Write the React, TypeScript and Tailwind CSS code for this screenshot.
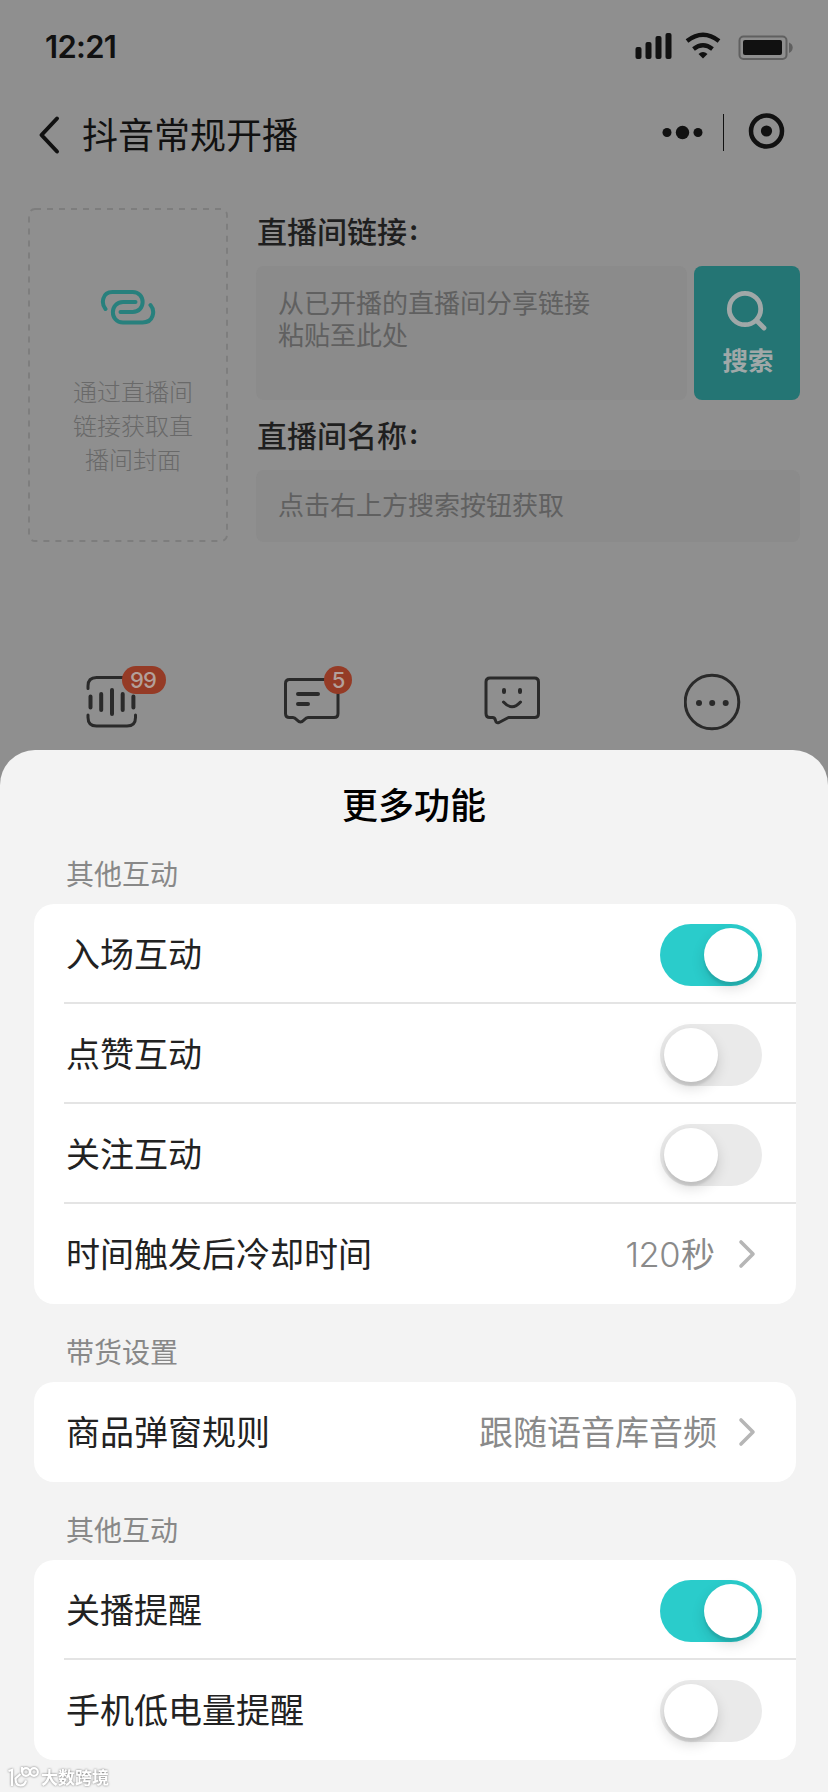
import { useState } from "react";
import type { ReactNode } from "react";

function Switch({ initial }: { initial: boolean }) {
  const [on, setOn] = useState(initial);
  return (
    <button
      type="button"
      role="switch"
      aria-checked={on}
      onClick={() => setOn(!on)}
      className={`mt-1 flex h-[62px] w-[102px] items-center rounded-full px-1 ${on ? "justify-end bg-[#2acccb]" : "justify-start bg-[#eaeaea]"}`}
    >
      <span className="size-[54px] rounded-full bg-white shadow-[0_6px_14px_rgba(0,0,0,0.14),0_4px_2px_rgba(0,0,0,0.08)]" />
    </button>
  );
}

function Value({ children }: { children: ReactNode }) {
  return (
    <div className="flex items-center pr-[6px] text-[34px] text-[#8a8a8a]">
      <span className="leading-[48px]">{children}</span>
      <svg width="18" height="30" viewBox="0 0 18 30" className="mt-[2px] ml-[21px]" fill="none" stroke="#b6b6b6" strokeWidth="3.600" strokeLinecap="round" strokeLinejoin="round">
        <path d="M3 3L15 15L3 27" />
      </svg>
    </div>
  );
}

function Row({ label, last, children }: { label: string; last?: boolean; children: ReactNode }) {
  return (
    <div className={`ml-[30px] flex h-[100px] items-center justify-between pr-[34px] pl-[2px] ${last ? "pb-[2px]" : "border-b-2 border-[#e4e4e4]"}`}>
      <span className="text-[34px] leading-[48px] text-[#222]">{label}</span>
      {children}
    </div>
  );
}

function Section({ title, children }: { title: string; children: ReactNode }) {
  return (
    <section>
      <h3 className="mb-[11px] pl-[32px] text-[28px] leading-10 text-[#888]">{title}</h3>
      <div className="rounded-[20px] bg-white">{children}</div>
    </section>
  );
}

function StatusBar() {
  return (
    <div className="flex h-[92px] items-center justify-between pr-[35px] pl-[45px]">
      <span className="mt-[2px] font-['Inter'] text-[31px] leading-10 font-semibold tracking-[-0.7px] text-[#111]">12:21</span>
      <svg width="160" height="30" viewBox="632 32 160 30" fill="none">
        <g fill="#111">
          <rect x="634.500" y="48" width="6" height="12" rx="2" />
          <rect x="644.500" y="43" width="6" height="17" rx="2" />
          <rect x="654.500" y="37" width="6" height="23" rx="2" />
          <rect x="664.500" y="34" width="6" height="26" rx="2" />
          <path d="M702 59.500L697.500 55Q702 51 706.500 55Z" />
          <rect x="742" y="41" width="39" height="15" rx="2" />
        </g>
        <path d="M686 42Q702 29.500 718 42M692.500 50Q702 42.500 711.500 50" stroke="#111" strokeWidth="4.300" />
        <rect x="738.500" y="37.500" width="47" height="22.500" rx="4" stroke="#606060" strokeWidth="2" />
        <path d="M788 43.500Q791.700 45 791.700 48.500T788 54Z" fill="#606060" />
      </svg>
    </div>
  );
}

function NavBar() {
  return (
    <div className="flex h-[86px] items-center justify-between pr-[42px] pl-[38px]">
      <div className="flex items-center">
        <svg width="22" height="40" viewBox="0 0 22 40" fill="none" stroke="#111" strokeWidth="4" strokeLinecap="round" strokeLinejoin="round">
          <path d="M19 3.500L3.500 20L19 36.500" />
        </svg>
        <h1 className="mb-1 ml-[22px] text-[36px] leading-[50px] text-[#111]">抖音常规开播</h1>
      </div>
      <svg width="124" height="40" viewBox="662 112 124 40" className="mb-[6px]" fill="#111">
        <circle cx="667" cy="132.500" r="4.500" />
        <circle cx="682.500" cy="132.500" r="6.700" />
        <circle cx="698" cy="132.500" r="4.500" />
        <rect x="723" y="114" width="1" height="37" />
        <circle cx="766.500" cy="131" r="15.500" fill="none" stroke="#111" strokeWidth="4.500" />
        <circle cx="766.500" cy="131" r="5.600" />
      </svg>
    </div>
  );
}

function CoverCard() {
  return (
    <div className="relative flex h-[334px] w-[200px] flex-col items-center">
      <svg className="absolute inset-0" width="200" height="334" fill="none">
        <rect x="1" y="1" width="198" height="332" rx="6" stroke="#7d7d7d" strokeWidth="1.800" strokeDasharray="6 6" />
      </svg>
      <svg width="56" height="36" viewBox="100 288.500 56 36" className="mt-[80.500px]" fill="none" stroke="#28807d" strokeWidth="4" strokeLinecap="round">
        <path d="M105.500 308.500C101 303 102 291.500 112.500 291.500H132.500C146 291.500 146 311.500 132.500 311.500H120.500" />
        <path d="M135.500 301.500H123C109.500 301.500 109.500 322 123 322H142.500C153.500 322 155.500 310.500 150.500 304.500" />
      </svg>
      <p className="mt-[49px] ml-[10px] w-[130px] text-center text-[24px] leading-[34px] font-light text-[#696969]">
        通过直播间
        <br />
        链接获取直
        <br />
        播间封面
      </p>
    </div>
  );
}

function FieldLabel({ children }: { children: ReactNode }) {
  return (
    <h2 className="flex h-[50px] items-center pb-[5px] text-[30px] leading-[45px] font-medium text-[#1f1f1f]">
      {children}
      <span className="ml-[2px] font-['Inter'] text-[28px] font-bold">:</span>
    </h2>
  );
}

function RoomForm() {
  return (
    <div className="flex gap-7 px-7 pt-[30px]">
      <CoverCard />
      <div className="flex flex-1 flex-col pl-px text-[26px] text-[#606060]">
        <FieldLabel>直播间链接</FieldLabel>
        <div className="-ml-px mt-2 flex h-[134px] gap-[7px]">
          <div className="flex-1 rounded-lg bg-[#8b8b8b] pt-5 pl-[22px] leading-8">
            从已开播的直播间分享链接
            <br />
            粘贴至此处
          </div>
          <button type="button" className="flex w-[106px] flex-col items-center rounded-lg bg-[#247574] pt-[24px] font-bold text-[#a0a8a8]">
            <svg width="42" height="42" viewBox="0 0 42 42" fill="none" stroke="#a0a8a8" strokeWidth="4.800" strokeLinecap="round">
              <circle cx="19" cy="19" r="15.700" />
              <path d="M31 31L38 38" />
            </svg>
            <span className="mt-[9px] ml-[2px] text-[25.500px] leading-9">搜索</span>
          </button>
        </div>
        <div className="mt-3">
          <FieldLabel>直播间名称</FieldLabel>
        </div>
        <div className="-ml-px mt-2 flex h-[72px] items-center rounded-lg bg-[#8b8b8b] pb-[5px] pl-[22px]">点击右上方搜索按钮获取</div>
      </div>
    </div>
  );
}

function Tools() {
  return (
    <div className="flex pt-[122px] pl-[84px]">
      <div className="relative w-[200px]">
        <svg width="60" height="64" viewBox="84 664 60 64" fill="none" stroke="#2a2a2a" strokeWidth="3" strokeLinecap="round">
          <path d="M88 688.500V686Q88 677.500 96.500 677.500H127Q135.500 677.500 135.500 686V688.500M88 715V717.500Q88 726 96.500 726H127Q135.500 726 135.500 717.500V715" />
          <path strokeWidth="4" d="M90.500 696.500V707.500M101.200 694V710M112 690V714M122.700 694V710M133.400 696.500V707.500" />
        </svg>
        <span className="absolute top-[2px] left-[38px] flex h-7 w-11 items-center justify-center rounded-full bg-[#953b26] pr-[2px] font-['Inter'] text-[22px] font-medium tracking-[-0.8px] text-[#b3a09b]">99</span>
      </div>
      <div className="relative w-[200px]">
        <svg width="60" height="64" viewBox="284 664 60 64" fill="none" stroke="#2a2a2a" strokeWidth="3" strokeLinejoin="round" strokeLinecap="round">
          <path d="M289.500 679.500H334Q338 679.500 338 683.500V713.500Q338 717.500 334 717.500H308C304.500 717.500 304 722 300.500 722S296.500 717.500 293 717.500H289.500Q285.500 717.500 285.500 713.500V683.500Q285.500 679.500 289.500 679.500Z" />
          <path strokeWidth="4" d="M298 694H318M298 704H308" />
        </svg>
        <span className="absolute top-[2px] left-[40px] flex size-7 items-center justify-center rounded-full bg-[#953b26] pl-px font-['Inter'] text-[22px] font-medium text-[#b3a09b]">5</span>
      </div>
      <div className="w-[200px]">
        <svg width="60" height="64" viewBox="484 664 60 64" fill="none" stroke="#2a2a2a" strokeWidth="3" strokeLinejoin="round" strokeLinecap="round">
          <path d="M490 678H534.500Q538.500 678 538.500 682V713.500Q538.500 717.500 534.500 717.500H508.500L499 722.500Q496 723.500 495.500 720.500Q495 717.500 492.500 717.500H490Q486 717.500 486 713.500V682Q486 678 490 678Z" />
          <path strokeWidth="4" d="M504 690V692M520 690V692" />
          <path d="M503.500 702Q512 711.500 520.500 702" />
        </svg>
      </div>
      <svg width="60" height="74" viewBox="684 664 60 74" fill="#2a2a2a">
        <circle cx="712" cy="702" r="26.800" fill="none" stroke="#2a2a2a" strokeWidth="3" />
        <circle cx="699" cy="703" r="3" />
        <circle cx="712.200" cy="703" r="3" />
        <circle cx="725.700" cy="703" r="3" />
      </svg>
    </div>
  );
}

function Watermark() {
  return (
    <div className="absolute bottom-[3px] left-2 flex items-center gap-[2px] drop-shadow-[0_0_1px_rgba(0,0,0,0.5)]">
      <svg width="31" height="22" viewBox="0 0 31 22" fill="none" stroke="#fff" strokeWidth="2.200">
        <path d="M0.500 5L4 4V20M12.500 8L7.500 12.500Q7.500 19.500 12.500 19.500Q17 19.500 18 14.500M14 1V6" />
        <circle cx="18" cy="6" r="3.800" />
        <circle cx="26" cy="6" r="3.800" />
      </svg>
      <span className="text-[17px] leading-6 font-bold text-white">大数跨境</span>
    </div>
  );
}

export default function App() {
  return (
    <main className="relative flex h-[1792px] w-[828px] flex-col overflow-hidden bg-[#8f8f8f] font-['Noto_Sans_CJK_SC','Noto_Sans',sans-serif]">
      <div className="h-[750px] shrink-0">
        <StatusBar />
        <NavBar />
        <RoomForm />
        <Tools />
      </div>
      <div className="absolute inset-x-0 bottom-0 h-[1042px] rounded-t-[35px] bg-[#f3f3f3] pr-8 pl-[34px]">
        <h2 className="pt-[28px] pr-[2px] pb-[25px] text-center text-[36px] leading-[50px] font-medium text-black">更多功能</h2>
        <div className="flex flex-col gap-[27px]">
          <Section title="其他互动">
            <Row label="入场互动"><Switch initial /></Row>
            <Row label="点赞互动"><Switch initial={false} /></Row>
            <Row label="关注互动"><Switch initial={false} /></Row>
            <Row label="时间触发后冷却时间" last><Value><span className="mr-px font-['Inter'] text-[34.500px] leading-none font-[350] tracking-[-0.5px]">120</span><span className="mr-[2px]">秒</span></Value></Row>
          </Section>
          <Section title="带货设置">
            <Row label="商品弹窗规则" last><Value>跟随语音库音频</Value></Row>
          </Section>
          <Section title="其他互动">
            <Row label="关播提醒"><Switch initial /></Row>
            <Row label="手机低电量提醒" last><Switch initial={false} /></Row>
          </Section>
        </div>
        <Watermark />
      </div>
    </main>
  );
}
